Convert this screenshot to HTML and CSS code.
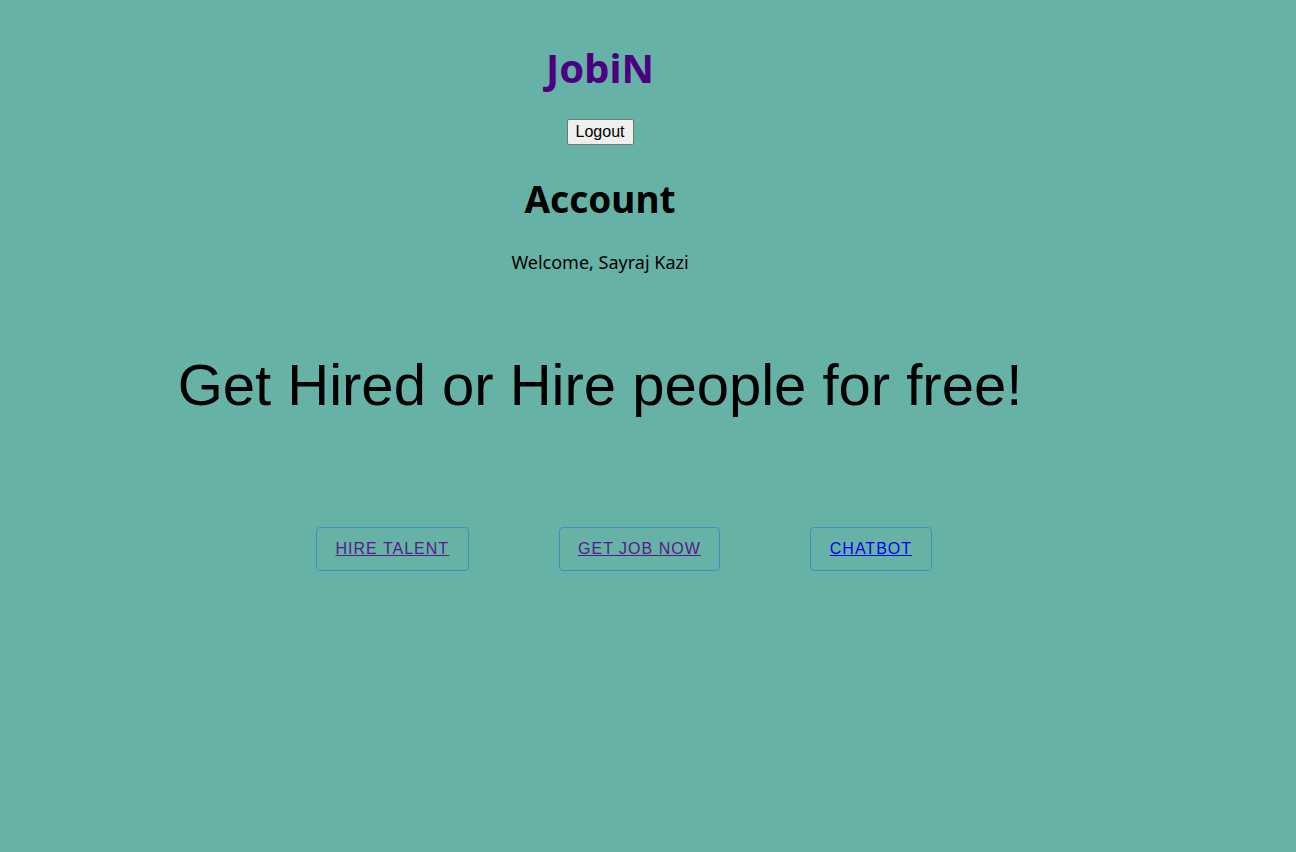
FILE: index.html
```html
<!DOCTYPE html>
<html>
<head>
<meta charset="utf-8">
<link rel="stylesheet" href="styles.css">
</head>
<body>
<div class="page">
  <header class="top">
    <h1 class="brand">JobiN</h1>
    <button class="logout">Logout</button>
  </header>
  <section class="account">
    <h2 class="account-title">Account</h2>
    <p class="welcome">Welcome, Sayraj Kazi</p>
  </section>
  <section class="hero">
    <h1 class="hero-title">Get Hired or Hire people for free!</h1>
  </section>
  <nav class="actions">
    <a class="action visited" href="#hire">HIRE TALENT</a>
    <a class="action visited" href="#job">GET JOB NOW</a>
    <a class="action link" href="#chat">CHATBOT</a>
  </nav>
</div>
</body>
</html>
```

FILE: styles.css
```css
html, body {
  margin: 0;
  padding: 0;
  background: #67b2a6;
  height: 100%;
}
.page {
  width: 1200px;
  font-family: "Noto Sans", "Segoe UI", sans-serif;
  color: #000;
}
.top {
  display: flex;
  flex-direction: column;
  align-items: center;
}
.brand {
  margin: 41px 0 0;
  font-size: 40px;
  line-height: 54px;
  font-weight: 700;
  color: #4b0082;
}
.logout {
  margin-top: 24px;
  font-family: "Liberation Sans", Arial, sans-serif;
  font-size: 16px;
  width: 67px;
  padding: 1px 6px;
  height: 26px;
  background: #efefef;
  border: 1px solid #767676;
  border-radius: 2px;
  color: #000;
}
.account {
  text-align: center;
}
.account-title {
  margin: 30px 0 0;
  font-size: 37px;
  line-height: 48px;
  font-weight: 700;
}
.welcome {
  margin: 27px 0 0;
  font-size: 18px;
  line-height: 24px;
}
.hero {
  text-align: center;
}
.hero-title {
  margin: 74px 0 0;
  font-family: "Liberation Sans", Arial, sans-serif;
  font-weight: 400;
  font-size: 58px;
  line-height: 74px;
}
.actions {
  display: flex;
  gap: 90px;
  margin: 105px 0 0 316px;
}
.action {
  display: block;
  font-family: "Liberation Sans", Arial, sans-serif;
  font-size: 16px;
  letter-spacing: 1px;
  padding: 12px 18.5px;
  line-height: 18px;
  border: 1px solid #3f8fbf;
  border-radius: 4px;
  text-decoration: underline;
}
.visited { color: #551a8b; }
.link { color: #0000ee; }
```
